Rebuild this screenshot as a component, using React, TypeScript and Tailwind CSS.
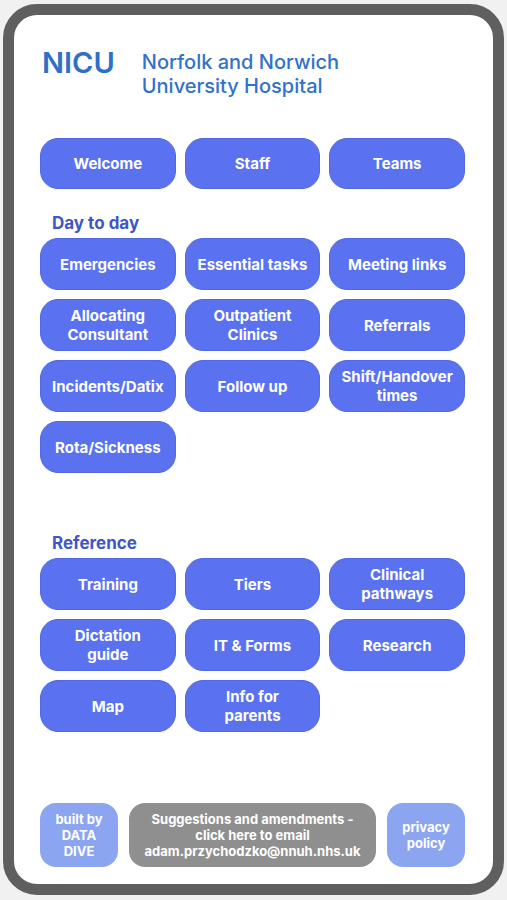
import React from 'react';

const font = { fontFamily: 'Inter, "Noto Sans", sans-serif' };

const topLinks = ['Welcome', 'Staff', 'Teams'];

const dayToDay = [
  'Emergencies',
  'Essential tasks',
  'Meeting links',
  'Allocating\nConsultant',
  'Outpatient\nClinics',
  'Referrals',
  'Incidents/Datix',
  'Follow up',
  'Shift/Handover\ntimes',
  'Rota/Sickness',
];

const reference = [
  'Training',
  'Tiers',
  'Clinical\npathways',
  'Dictation\nguide',
  'IT & Forms',
  'Research',
  'Map',
  'Info for\nparents',
];

const NavButton = ({ label, tall = false }: { label: string; tall?: boolean }) => (
  <button
    className={`flex items-center justify-center px-1 rounded-[18px] bg-[#5a72f0] border border-[#5068e4] text-white text-center font-bold text-[15px] leading-[19px] whitespace-pre-line ${tall ? 'h-[52px]' : 'h-[51px]'}`}
  >
    {label}
  </button>
);

const SectionTitle = ({ children, className = '' }: { children: React.ReactNode; className?: string }) => (
  <h2 className={`pl-3 text-[17px] leading-[22px] font-bold text-[#3f56c8] ${className}`}>{children}</h2>
);

export default function App() {
  return (
    <div className="min-h-screen w-full bg-[#f1f1f1] pt-[4px] px-[3px]" style={font}>
      <div className="h-[891px] rounded-[34px] border-[11px] border-[#5f5f5f] bg-white pl-[26px] pr-[28px] pt-[30px]">
        {/* header */}
        <div className="flex items-start">
          <div className="text-[29px] leading-[36px] font-semibold text-[#2f6fc8] pl-[2px]">NICU</div>
          <div className="ml-[27px] mt-[5px] text-[20px] leading-[24px] font-medium text-[#3172c9]">
            <div>Norfolk and Norwich</div>
            <div>University Hospital</div>
          </div>
        </div>

        <div className="mt-[40px] grid grid-cols-3 gap-x-[9px]">
          {topLinks.map((l) => (
            <NavButton key={l} label={l} />
          ))}
        </div>

        <SectionTitle className="mt-[23px]">Day to day</SectionTitle>
        <div className="mt-[4px] grid grid-cols-3 gap-x-[9px] gap-y-[9px]">
          {dayToDay.map((l) => (
            <NavButton key={l} label={l} tall />
          ))}
        </div>

        <SectionTitle className="mt-[59px]">Reference</SectionTitle>
        <div className="mt-[4px] grid grid-cols-3 gap-x-[9px] gap-y-[9px]">
          {reference.map((l) => (
            <NavButton key={l} label={l} tall />
          ))}
        </div>

        {/* footer */}
        <div className="mt-[71px] flex justify-between text-white font-bold text-[13px] leading-[16px] text-center">
          <div className="w-[78px] h-[64px] rounded-[16px] bg-[#8ba5f1] flex items-center justify-center">
            built by
            <br />
            DATA
            <br />
            DIVE
          </div>
          <div className="w-[247px] h-[64px] rounded-[16px] bg-[#8f8f8f] flex items-center justify-center">
            Suggestions and amendments -
            <br />
            click here to email
            <br />
            adam.przychodzko@nnuh.nhs.uk
          </div>
          <div className="w-[78px] h-[64px] rounded-[16px] bg-[#8ba5f1] flex items-center justify-center">
            privacy
            <br />
            policy
          </div>
        </div>
      </div>
    </div>
  );
}
